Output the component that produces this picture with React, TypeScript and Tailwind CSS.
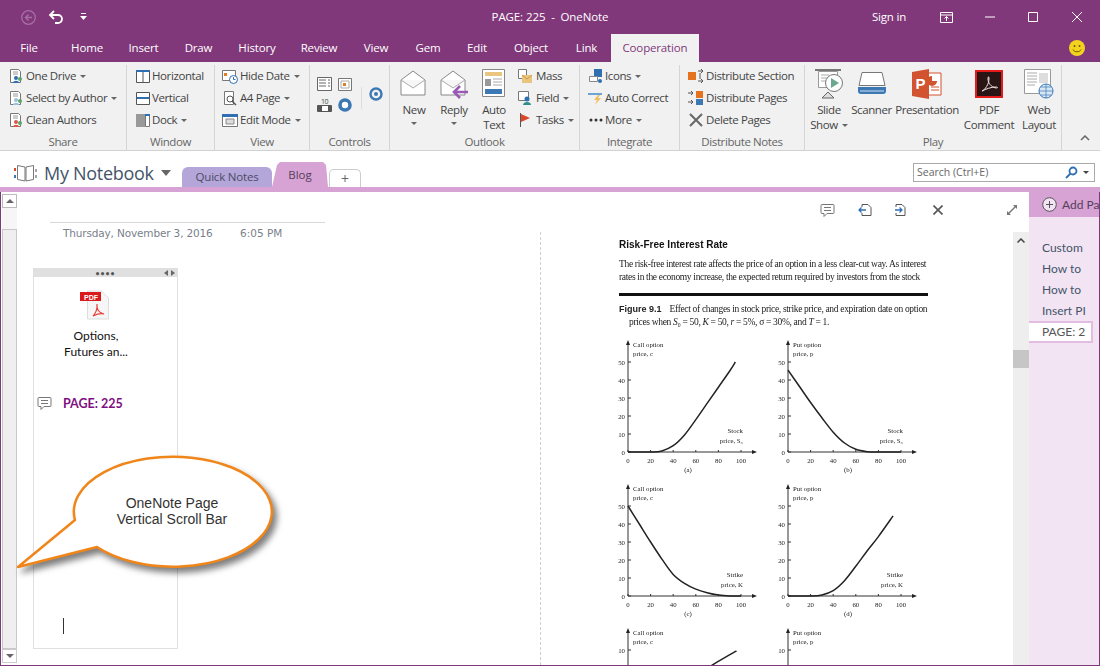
import type { ReactNode } from 'react';

const tabs = [
  { name: 'File', w: 'w-[58px]' },
  { name: 'Home', w: 'w-[58px]' },
  { name: 'Insert', w: 'w-[55px]' },
  { name: 'Draw', w: 'w-[55px]' },
  { name: 'History', w: 'w-[62px]' },
  { name: 'Review', w: 'w-[62px]' },
  { name: 'View', w: 'w-[52px]' },
  { name: 'Gem', w: 'w-[52px]' },
  { name: 'Edit', w: 'w-[46px]' },
  { name: 'Object', w: 'w-[62px]' },
  { name: 'Link', w: 'w-[49px]' },
];

const Ico = ({ children, w = 16, h = 16 }: { children: ReactNode; w?: number; h?: number }) => (
  <svg width={w} height={h} viewBox={`0 0 ${w} ${h}`} fill="none" className="shrink-0">
    {children}
  </svg>
);

const Caret = () => <span className="ml-[4px] inline-block border-x-[3px] border-t-[3px] border-x-transparent border-t-[#666] align-middle" />;

function Small({ icon, label, caret, gap = 'ml-[2px]' }: { icon: ReactNode; label: string; caret?: boolean; gap?: string }) {
  return (
    <div className="flex h-[22px] items-center whitespace-nowrap">
      {icon}
      <span className={gap}>{label}</span>
      {caret && <Caret />}
    </div>
  );
}

function Big({ icon, lines, caret, w }: { icon: ReactNode; lines: string[]; caret?: boolean; w: string }) {
  return (
    <div className={`flex shrink-0 flex-col items-center whitespace-nowrap leading-[15px] ${w}`}>
      <div className="flex h-[37px] items-center justify-center">{icon}</div>
      {lines.map((l, i) => (
        <div key={l}>
          {l}
          {caret && i === lines.length - 1 && lines.length > 1 && <Caret />}
        </div>
      ))}
      {caret && lines.length === 1 && (
        <div className="mt-[5px]">
          <span className="block border-x-[3px] border-t-[3px] border-x-transparent border-t-[#666]" />
        </div>
      )}
    </div>
  );
}

function Group({ label, w, children, pl = 'pl-[8px]' }: { label: string; w: string; children: ReactNode; pl?: string }) {
  return (
    <div className={`flex shrink-0 flex-col border-r border-[#d5d5d5] ${w}`}>
      <div className={`flex h-[68px] ${pl}`}>{children}</div>
      <div className="mt-[1px] text-center leading-[17px] text-[#666]">{label}</div>
    </div>
  );
}

const PageIcon = ({ badge }: { badge: string }) => (
  <Ico>
    <path d="M2.5 1.5h8l2 2v11h-10z" fill="#fff" stroke="#777" />
    <path d="M5 4h5M5 6h5" stroke="#999" />
    <circle cx="8" cy="10" r="2" fill={badge} />
    <circle cx="12" cy="11" r="2" fill="#5ba56a" />
    <path d="M5 15c0-3 6-3 6 0z" fill={badge} />
  </Ico>
);

const Envelope = ({ reply }: { reply?: boolean }) => (
  <Ico w={30} h={30}>
    <path d="M2 11 14 2l12 9v15H2z" fill="#fff" stroke="#888" />
    <path d="M2 11l12 8 12-8" stroke="#aaa" fill="#f6f6f6" />
    {reply && <path d="M29 23H15m6-6-6 6 6 6" stroke="#9b59b6" strokeWidth="2.6" />}
  </Ico>
);

// catmull-rom through the data points so the curves don't look kinked
function smooth(p: number[][]) {
  if (p.length === 0) return '';
  let d = `M${p[0][0]} ${p[0][1]}`;
  for (let i = 0; i < p.length - 1; i++) {
    const a = p[Math.max(i - 1, 0)];
    const b = p[i];
    const c = p[i + 1];
    const e = p[Math.min(i + 2, p.length - 1)];
    d += `C${b[0] + (c[0] - a[0]) / 6} ${b[1] + (c[1] - a[1]) / 6} ${c[0] - (e[0] - b[0]) / 6} ${c[1] - (e[1] - b[1]) / 6} ${c[0]} ${c[1]}`;
  }
  return d;
}

function Chart({ points, max = 50, top, bottom, right1, right2, caption, ticks, cut }: {
  points: number[][]; max?: number; top: string; bottom: string; right1?: string; right2?: string; caption?: string; ticks: number[]; cut?: boolean;
}) {
  const px = (x: number) => 12 + x * 1.13;
  const py = (y: number) => 114 - (y / max) * 90;
  return (
    <svg width="160" height={cut ? 39 : 144} viewBox={cut ? '0 0 160 39' : '0 0 160 144'} className="shrink-0" fill="#222" fontFamily="'Liberation Serif', serif" fontSize="6.8">
      <path d="M12 114V5" stroke="#333" strokeWidth="1" />
      <path d="M12 2l-2 5h4z" stroke="none" />
      {!cut && <path d="M12 114H137" stroke="#333" strokeWidth="1" />}
      {!cut && <path d="M141 114l-5-2v4z" stroke="none" />}
      {ticks.map((t) => (
        <g key={t}>
          <path d={`M12 ${py(t)}h3`} stroke="#333" />
          <text x="9" y={py(t) + 2.5} textAnchor="end">{t}</text>
        </g>
      ))}
      {!cut && [0, 20, 40, 60, 80, 100].map((t) => (
        <g key={t}>
          <path d={`M${px(t)} 114v-2`} stroke="#333" />
          <text x={px(t)} y="125" textAnchor="middle">{t}</text>
        </g>
      ))}
      <path d={smooth(points.map((p) => [px(p[0]), py(p[1])]))} fill="none" stroke="#222" strokeWidth="1.5" strokeLinejoin="round" />
      <text x="17" y="8.5">{top}</text>
      <text x="17" y="17.5">{bottom}</text>
      {right1 && <text x="127" y="95" textAnchor="end">{right1}</text>}
      {right2 && <text x="127" y="105" textAnchor="end">{right2}</text>}
      {caption && <text x="72" y="134" textAnchor="middle">{caption}</text>}
    </svg>
  );
}

export default function App() {
  return (
    <div className="flex h-[666px] w-[1100px] flex-col overflow-hidden bg-white font-['Open_Sans',sans-serif] text-[11px] text-[#444]">
      {/* title bar */}
      <div className="relative flex h-[34px] shrink-0 items-center bg-[#80387a] text-white">
        <div className="ml-[21px] flex items-center">
          <svg width="15" height="15" viewBox="0 0 15 15" fill="none" stroke="#a66fa3" strokeWidth="1.3">
            <circle cx="7.5" cy="7.5" r="6.8" />
            <path d="M11 7.5H4.5m3-3-3 3 3 3" />
          </svg>
          <svg width="16" height="16" viewBox="0 0 16 16" fill="none" stroke="#fff" strokeWidth="1.8" className="ml-[12px]">
            <path d="M6 2 2 6l4 4M2.5 6H10a3.5 3.5 0 0 1 0 8H7" />
          </svg>
          <svg width="7" height="8" viewBox="0 0 7 8" fill="#fff" className="ml-[16px]">
            <path d="M1 0h5v1H1zM0 3h7L3.5 7z" />
          </svg>
        </div>
        <div className="absolute left-[450px] w-[200px] text-center text-[11.5px] tracking-[-0.1px]">PAGE: 225&nbsp;&nbsp;-&nbsp;&nbsp;OneNote</div>
        <div className="ml-auto flex items-center">
          <span className="mr-[34px] text-[11.5px] tracking-[-0.2px]">Sign in</span>
          <svg width="13" height="11" viewBox="0 0 13 11" fill="none" stroke="#fff" className="mr-[32px]">
            <path d="M.5.5h12v10H.5zM.5 3h12M6.5 9V4.500M4.500 6.500l2-2 2 2" />
          </svg>
          <svg width="10" height="2" viewBox="0 0 10 2" className="mr-[33px]"><path d="M0 1h10" stroke="#fff" /></svg>
          <svg width="10" height="10" viewBox="0 0 10 10" className="mr-[34px]"><path d="M.5.5h9v9h-9z" stroke="#fff" fill="none" /></svg>
          <svg width="10" height="10" viewBox="0 0 10 10" className="mr-[18px]"><path d="M0 0l10 10M10 0 0 10" stroke="#fff" /></svg>
        </div>
      </div>

      {/* tabs */}
      <div className="flex h-[28px] shrink-0 items-stretch bg-[#80387a] text-[11.5px] tracking-[-0.15px] text-white">
        {tabs.map((t) => (
          <div key={t.name} className={`flex items-center justify-center ${t.w}`}>{t.name}</div>
        ))}
        <div className="flex w-[88px] items-center justify-center bg-[#f1f1f1] text-[#80387a]">Cooperation</div>
        <div className="ml-auto mr-[15px] flex items-center">
          <svg width="16" height="16" viewBox="0 0 16 16">
            <circle cx="8" cy="8" r="8" fill="#f4d31f" />
            <circle cx="5.5" cy="6" r="1" fill="#6b5a00" />
            <circle cx="10.5" cy="6" r="1" fill="#6b5a00" />
            <path d="M4 9.500c1 3 7 3 8 0" stroke="#6b5a00" fill="none" />
          </svg>
        </div>
      </div>

      {/* ribbon */}
      <div className="flex h-[89px] shrink-0 border-b border-[#d2d2d2] bg-[#f1f1f1] pt-[3px] text-[11.5px] tracking-[-0.4px]">
        <Group label="Share" w="w-[127px]">
          <div className="flex flex-col">
            <Small icon={<PageIcon badge="#2f6fb2" />} label="One Drive" caret />
            <Small icon={<PageIcon badge="#9dbfdc" />} label="Select by Author" caret />
            <Small icon={<PageIcon badge="#d9584a" />} label="Clean Authors" />
          </div>
        </Group>
        <Group label="Window" w="w-[88px]">
          <div className="flex flex-col">
            <Small gap="ml-[1px]" icon={<Ico><path d="M1.5 2.5h13v12h-13zM8 2.500v12" stroke="#555" fill="#fff" /><path d="M1 2h14v2H1z" fill="#2f6fb2" /></Ico>} label="Horizontal" />
            <Small gap="ml-[1px]" icon={<Ico><path d="M1.5 2.5h13v12h-13zM1.500 8.500h13" stroke="#555" fill="#fff" /><path d="M2 7h12v2H2z" fill="#2f6fb2" /></Ico>} label="Vertical" />
            <Small gap="ml-[1px]" icon={<Ico><path d="M1 2h9v13H1z" fill="#999" /><path d="M10.5 2.5h4v12h-4z" fill="#fff" stroke="#777" /><path d="M10 2h5v2h-5z" fill="#2f6fb2" /></Ico>} label="Dock" caret />
          </div>
        </Group>
        <Group label="View" w="w-[95px]" pl="pl-[7px]">
          <div className="flex flex-col">
            <Small icon={<Ico><path d="M.5 2.5h13v10H.5z" fill="#fff" stroke="#777" /><path d="M2 5h3v3H2z" fill="#e07b27" /><circle cx="11.5" cy="11.5" r="4" fill="#fff" stroke="#2f6fb2" /><path d="M11.5 9v2.500h2" stroke="#2f6fb2" /></Ico>} label="Hide Date" caret />
            <Small icon={<Ico><path d="M2.5 1.5h9v13h-9z" fill="#fff" stroke="#777" /><circle cx="8" cy="9" r="3" fill="#fff" stroke="#555" /><path d="m10 11 4 4" stroke="#555" strokeWidth="1.5" /></Ico>} label="A4 Page" caret />
            <Small icon={<Ico><path d="M.5 2.5h15v12H.5z" fill="#fff" stroke="#777" /><path d="M0 2h16v3H0z" fill="#2f6fb2" /><path d="M4 7h8v5H4z" fill="#ddd" stroke="#888" /></Ico>} label="Edit Mode" caret />
          </div>
        </Group>
        <Group label="Controls" w="w-[80px]" pl="pl-[7px]">
          <div className="grid h-[48px] grid-cols-2 gap-x-[5px] gap-y-[4px] pt-[11px]">
            <Ico><path d="M.5 1.5h14v13H.5z" fill="#fff" stroke="#666" /><path d="M2 4h7M2 7h7M2 10h7M11 4h2M11 7h2M11 10h2" stroke="#666" /></Ico>
            <Ico><path d="M.5 2.5h13v12H.5z" fill="#fff" stroke="#777" /><path d="M3 5h8v7H3z" stroke="#aaa" /><path d="M5 7h3v3H5z" fill="#e07b27" /></Ico>
            <Ico><text x="4" y="6.5" fontSize="7" fill="#444">10</text><path d="M.5 8.5h14v6H.5z" fill="#fff" stroke="#555" /><path d="M1 9h4v5H1zM11 9h3v5h-3z" fill="#555" /></Ico>
            <Ico w={14} h={16}><circle cx="7" cy="8" r="5" fill="#fff" stroke="#3c78b4" strokeWidth="3.6" /></Ico>
          </div>
          <div className="ml-[7px] mt-[22px] h-[22px] border-l border-[#ddd] pl-[7px]">
            <svg width="14" height="14" viewBox="0 0 14 14"><circle cx="7" cy="7" r="5.5" fill="none" stroke="#3c78b4" strokeWidth="2.4" /><circle cx="7" cy="7" r="2" fill="#3c78b4" /></svg>
          </div>
        </Group>
        <Group label="Outlook" w="w-[190px]" pl="pl-[4px]">
          <Big w="w-[40px]" caret lines={['New']} icon={<Envelope />} />
          <Big w="w-[40px]" caret lines={['Reply']} icon={<Envelope reply />} />
          <Big w="w-[40px]" lines={['Auto', 'Text']} icon={
            <Ico w={24} h={30}>
              <path d="M.5.5h22v27H.5z" fill="#fff" stroke="#888" />
              <path d="M3 3h17v4H3z" fill="#eac57d" />
              <path d="M3 10h6v7H3z" fill="#999" />
              <path d="M11 10h9M11 13h9M11 16h9" stroke="#aaa" />
              <path d="M3 20h17v5H3z" fill="#3c78b4" />
            </Ico>
          } />
          <div className="ml-[3px] flex flex-col">
            <Small gap="ml-[3px]" icon={<Ico><path d="M1.5 1.5h8v9h-8z" fill="#fff" stroke="#777" /><path d="M5 7h10v8H5z" fill="#eac57d" /><path d="m5 7 5 4 5-4" stroke="#c99a45" /></Ico>} label="Mass" />
            <Small gap="ml-[3px]" caret icon={<Ico><path d="M1.5 1.5h10v9h-10z" fill="#fff" stroke="#777" /><circle cx="10" cy="9" r="2.5" fill="#2f6fb2" /><path d="M6 15c0-4 8-4 8 0z" fill="#2f8f88" /></Ico>} label="Field" />
            <Small gap="ml-[3px]" caret icon={<Ico><path d="M3.5 1v14" stroke="#555" /><path d="M4 2l9 4-9 4z" fill="#d9482b" /></Ico>} label="Tasks" />
          </div>
        </Group>
        <Group label="Integrate" w="w-[100px]">
          <div className="flex flex-col">
            <Small gap="ml-[1px]" caret icon={<Ico><path d="M6 1h8v8H6z" fill="#2f6fb2" /><path d="M1.5 8.5h8v5h-8z" fill="#fff" stroke="#888" /><circle cx="12" cy="13" r="2" fill="#2f6fb2" /></Ico>} label="Icons" />
            <Small gap="ml-[1px]" icon={<Ico><path d="M0 3h14v2H0z" fill="#6fa3d6" /><path d="M10 5 6 10h3l-2 5 6-7h-3l2-3z" fill="#f0c060" /></Ico>} label="Auto Correct" />
            <Small gap="ml-[1px]" caret icon={<Ico><circle cx="3" cy="8" r="1.5" fill="#333" /><circle cx="8" cy="8" r="1.5" fill="#333" /><circle cx="13" cy="8" r="1.5" fill="#333" /></Ico>} label="More" />
          </div>
        </Group>
        <Group label="Distribute Notes" w="w-[125px]">
          <div className="flex flex-col">
            <Small icon={<Ico><path d="M0 4h8v8H0z" fill="#e5721f" /><path d="M10 3h5m-2-2 2 2-2 2M10 13h5m-2-2 2 2-2 2M12 5v6" stroke="#555" /></Ico>} label="Distribute Section" />
            <Small icon={<Ico><path d="M0 3h5m-2-2 2 2-2 2M0 12h5m-2-2 2 2-2 2" stroke="#555" /><path d="M8 1h7v7H8z" fill="#e5721f" /><path d="M8 9h7v6H8z" fill="#3c78b4" /></Ico>} label="Distribute Pages" />
            <Small icon={<Ico><path d="M2 2l12 12M14 2 2 14" stroke="#666" strokeWidth="2" /></Ico>} label="Delete Pages" />
          </div>
        </Group>
        <Group label="Play" w="w-[257px]" pl="pl-[3px]">
          <Big w="w-[42px]" caret lines={['Slide', 'Show']} icon={
            <Ico w={30} h={32}>
              <path d="M1 1h26v2H1z" fill="#777" />
              <path d="M4.5 3.5h19v16h-19z" fill="#fff" stroke="#999" />
              <path d="M7 7h8M7 10h6M7 13h6" stroke="#aaa" />
              <circle cx="20" cy="15" r="8.5" fill="#fff" stroke="#777" />
              <path d="m17 10 8 5-8 5z" fill="#6aa98f" />
              <path d="M8 30l6-6 6 6z" fill="#ddd" stroke="#666" />
            </Ico>
          } />
          <Big w="w-[43px]" lines={['Scanner']} icon={
            <Ico w={30} h={28}>
              <path d="M5 2.5h20l3 13H2z" fill="#fff" stroke="#777" />
              <path d="M1 17h28v4a3 3 0 0 1-3 3H4a3 3 0 0 1-3-3z" fill="#3c78b4" />
              <path d="M3 21h24" stroke="#cfe0f0" />
            </Ico>
          } />
          <Big w="w-[68px]" lines={['Presentation']} icon={
            <Ico w={30} h={30}>
              <path d="M12 4h17v22H12z" fill="#fff" stroke="#d2532f" />
              <path d="M20 7a5 5 0 1 0 5 5h-5z" fill="#d2532f" />
              <path d="M19 18h8M19 21h8" stroke="#d2532f" />
              <path d="M0 3 17 0v30L0 27z" fill="#d2532f" />
              <text x="3.5" y="20" fontSize="15" fontWeight="700" fill="#fff" fontFamily="'Liberation Sans', sans-serif">P</text>
            </Ico>
          } />
          <Big w="w-[56px]" lines={['PDF', 'Comment']} icon={
            <Ico w={28} h={28}>
              <path d="M1 1h26v26H1z" fill="#2a1515" stroke="#e31b1b" strokeWidth="2" />
              <path d="M7 21c3-1 7-7 7-12 0-3-1-3-1 0 0 4 3 8 8 9 2 0 2-1 0-1-5 0-10 2-14 4z" stroke="#f0e4e4" fill="none" />
            </Ico>
          } />
          <Big w="w-[44px]" lines={['Web', 'Layout']} icon={
            <Ico w={30} h={30}>
              <path d="M.5.5h26v24H.5z" fill="#fff" stroke="#999" />
              <path d="M3 4h10M3 7h10M3 10h10M3 13h10M3 16h8" stroke="#aaa" />
              <path d="M15 4h9v10h-9z" fill="#ddd" />
              <circle cx="22" cy="22" r="7" fill="#d7e7f6" stroke="#3c78b4" />
              <path d="M15 22h14M22 15v14M17 18h10M17 26h10" stroke="#3c78b4" strokeWidth="0.7" />
            </Ico>
          } />
        </Group>
        <div className="flex flex-1 items-end justify-center pb-[9px] pl-[8px]">
          <svg width="10" height="6" viewBox="0 0 10 6" fill="none" stroke="#666" strokeWidth="1.5"><path d="m1 5 4-4 4 4" /></svg>
        </div>
      </div>

      {/* notebook bar */}
      <div className="flex h-[36px] shrink-0 items-end bg-white">
        <div className="mb-[2px] ml-[14px] flex w-[168px] items-center">
          <svg width="23" height="20" viewBox="0 0 23 20" fill="none" className="shrink-0">
            <path d="M3.5 2.5 11 4v14l-7.500-1.500zM19.500 2.500 12 4v14l7.500-1.500z" fill="#fff" stroke="#777" />
            <path d="M1 5v3" stroke="#d9482b" strokeWidth="2" />
            <path d="M1 12v3" stroke="#3c78b4" strokeWidth="2" />
            <path d="M22 6v3M22 12v3" stroke="#888" strokeWidth="1.5" />
          </svg>
          <span className="ml-[7px] whitespace-nowrap text-[18px] leading-[24px] tracking-[-0.3px] text-[#44546a]">My Notebook</span>
          <span className="ml-[7px] border-x-[5px] border-t-[6px] border-x-transparent border-t-[#666]" />
        </div>
        <div className="flex h-[20px] w-[90px] items-center justify-center rounded-t-[6px] bg-[#b5a6d9] text-[11.5px] tracking-[-0.2px] text-[#4c4c66]">Quick Notes</div>
        <div className="flex h-[25px] w-[56px] items-center justify-center bg-[#d7a3d5] text-[11.5px] text-[#55405a] [clip-path:polygon(0_100%,5px_3px,8px_0,calc(100%-5px)_0,calc(100%-2px)_3px,100%_100%)]">Blog</div>
        <div className="ml-[1px] flex h-[18px] w-[32px] items-center justify-center rounded-t-[5px] border border-b-0 border-[#ccc] text-[14px] leading-none text-[#666]">+</div>
        <div className="mb-[5px] ml-auto mr-[5px] flex h-[19px] w-[182px] items-center justify-between border border-[#aaa] pl-[3px] pr-[5px] text-[10.5px] text-[#666]">
          <span>Search (Ctrl+E)</span>
          <span className="flex items-center">
            <svg width="13" height="13" viewBox="0 0 13 13" fill="none" stroke="#2f6fb2" strokeWidth="1.8"><circle cx="8" cy="5" r="3.5" /><path d="M5.5 7.5 1 12" /></svg>
            <span className="ml-[5px] border-x-[3px] border-t-[3px] border-x-transparent border-t-[#444]" />
          </span>
        </div>
      </div>

      <div className="h-[5px] shrink-0 bg-[#d7a3d5]" />

      {/* main */}
      <div className="flex min-h-0 flex-1 border-b border-l border-[#80387a]">
        <div className="flex w-[16px] shrink-0 flex-col pl-[1px] pt-[2px]">
          <div className="flex h-[14px] w-[15px] items-center justify-center border border-[#bbb] bg-white">
            <span className="border-x-[4px] border-b-[4px] border-x-transparent border-b-[#666]" />
          </div>
          <div className="h-[21px] bg-[#f6f6f6]" />
          <div className="w-[15px] flex-1 border border-[#c8c8c8] bg-[#efefef]" />
          <div className="flex h-[14px] w-[15px] items-center justify-center border border-[#ccc] bg-white">
            <span className="border-x-[4px] border-t-[4px] border-x-transparent border-t-[#666]" />
          </div>
          <div className="h-[2px]" />
        </div>

        {/* note page */}
        <div className="relative w-[523px] shrink-0 pl-[16px] pt-[30px]">
          <div className="ml-[17px] h-[1px] w-[275px] bg-[#d8d8d8]" />
          <div className="ml-[30px] mt-[3px] flex font-['DejaVu_Sans',sans-serif] text-[10.5px] leading-[14px] text-[#7a7f8a]">
            <span className="w-[177px] tracking-[-0.15px]">Thursday, November 3, 2016</span>
            <span>6:05 PM</span>
          </div>
          <div className="mt-[28px] flex h-[381px] w-[145px] flex-col border border-[#e0e0e0] font-['Lato',sans-serif]">
            <div className="relative flex h-[8px] shrink-0 items-center justify-center bg-[#e0e0e0]">
              <span className="text-[7px] font-bold leading-none tracking-[1px] text-[#555]">••••</span>
              <span className="absolute right-[2px] top-[1px] flex gap-[3px]">
                <span className="border-y-[3px] border-r-[4px] border-y-transparent border-r-[#666]" />
                <span className="border-y-[3px] border-l-[4px] border-y-transparent border-l-[#666]" />
              </span>
            </div>
            <div className="ml-[46px] mt-[13px] w-[30px]">
              <svg width="30" height="30" viewBox="0 0 30 30">
                <path d="M7.5 1h14l7 7v21h-21z" fill="#f6f6f6" stroke="#ddd" />
                <path d="M0 2h21v9H0z" fill="#d9191c" />
                <text x="4" y="9.5" fontSize="7" fontWeight="700" fill="#fff" fontFamily="'Liberation Sans', sans-serif">PDF</text>
                <path d="M13 26c2-2 5-7 4-12-1 5 2 9 7 10-3-1-7 0-11 2z" fill="none" stroke="#e8403a" strokeWidth="1.2" />
              </svg>
            </div>
            <div className="ml-[2px] mt-[8px] w-[120px] text-center text-[12px] leading-[16px] text-[#111]">
              Options,
              <br />
              Futures an...
            </div>
            <div className="relative ml-[29px] mt-[36px] text-[12.5px] font-bold leading-[16px] text-[#800f80]">
              PAGE: 225
              <svg width="15" height="15" viewBox="0 0 15 15" fill="none" stroke="#777" className="absolute -left-[26px] top-[0px]">
                <path d="M2 1.5h11a1 1 0 0 1 1 1v7a1 1 0 0 1-1 1H7l-3 3v-3H2a1 1 0 0 1-1-1v-7a1 1 0 0 1 1-1zM4 4.500h7M4 7.500h7" />
              </svg>
            </div>
            <div className="mb-[14px] ml-[29px] mt-auto h-[16px] w-[1px] bg-[#333]" />
          </div>

          {/* callout */}
          <div className="absolute left-0 top-[262px] h-[125px] w-[270px]">
            <svg width="270" height="125" viewBox="0 0 270 125" className="absolute inset-0 overflow-visible drop-shadow-[4px_5px_3px_rgba(0,0,0,0.5)]">
              <path d="M58 66 1 113 80 93A99 55 0 1 0 58 66Z" fill="#fff" stroke="#f0851a" strokeWidth="2.5" strokeLinejoin="round" />
            </svg>
            <div className="absolute left-[55px] top-[41px] w-[200px] text-center font-['Liberation_Sans',sans-serif] text-[14px] leading-[16px] text-[#333]">
              OneNote Page
              <br />
              Vertical Scroll Bar
            </div>
          </div>
        </div>

        {/* pdf pane */}
        <div className="flex w-[489px] min-w-0 shrink-0 flex-col">
          <div className="flex h-[40px] shrink-0 items-center pb-[4px] pl-[280px] text-[#666]">
            <svg width="15" height="15" viewBox="0 0 15 15" fill="none" stroke="#777"><path d="M2 1.5h11a1 1 0 0 1 1 1v7a1 1 0 0 1-1 1H7l-3 3v-3H2a1 1 0 0 1-1-1v-7a1 1 0 0 1 1-1zM4 4.500h7M4 7.500h7" /></svg>
            <svg width="14" height="14" viewBox="0 0 14 14" fill="none" className="ml-[23px]"><path d="M4 4V1.500h6l3 3v8H4V10" stroke="#555" /><path d="M8 7H1m2.500-2.500L1 7l2.500 2.500" stroke="#2f6fb2" strokeWidth="1.3" /></svg>
            <svg width="14" height="14" viewBox="0 0 14 14" fill="none" className="ml-[22px]"><path d="M2 4V1.500h6l3 3v8H2V10" stroke="#555" /><path d="M1 7h7M5.500 4.500 8 7 5.500 9.500" stroke="#2f6fb2" strokeWidth="1.3" /></svg>
            <svg width="10" height="10" viewBox="0 0 10 10" className="ml-[25px]"><path d="m.5.5 9 9m0-9-9 9" stroke="#555" strokeWidth="1.6" /></svg>
            <svg width="10" height="10" viewBox="0 0 10 10" fill="#777" className="ml-[64px]"><path d="M6 0h4v4L8.500 2.500l-6 6L4 10H0V6l1.500 1.500 6-6z" /></svg>
          </div>
          <div className="flex min-h-0 flex-1">
            <div className="min-w-0 flex-1 overflow-hidden border-l border-dashed border-[#d0d0d0] pl-[78px] pt-[7px] font-['Liberation_Serif',serif] text-[#222] blur-[0.4px]">
              <div className="w-[309px]">
                <div className="whitespace-nowrap font-['Liberation_Sans',sans-serif] text-[10px] font-bold leading-[12px] text-[#111]">Risk-Free Interest Rate</div>
                <div className="mt-[7px] whitespace-nowrap text-[9.5px] leading-[13px] tracking-[-0.33px]">
                  The risk-free interest rate affects the price of an option in a less clear-cut way. As interest
                  <br />
                  rates in the economy increase, the expected return required by investors from the stock
                </div>
                <div className="mt-[9px] h-[3px] bg-[#111]" />
                <div className="mt-[7px] whitespace-nowrap text-[9.5px] leading-[13px] tracking-[-0.33px]">
                  <b className="font-['Liberation_Sans',sans-serif] text-[9px] tracking-normal">Figure 9.1</b>
                  <span className="ml-[8px]">Effect of changes in stock price, strike price, and expiration date on option</span>
                  <br />
                  <span className="ml-[10px]">prices when <i>S</i>₀ = 50, <i>K</i> = 50, <i>r</i> = 5%, σ = 30%, and <i>T</i> = 1.</span>
                </div>
              </div>
              <div className="-ml-[3px] mt-[9px] grid w-[320px] grid-cols-2">
                <Chart ticks={[0, 10, 20, 30, 40, 50]} top="Call option" bottom="price, c" right1="Stock" right2="price, S₀" caption="(a)"
                  points={[[0, 0], [20, 0], [30, 0.6], [40, 3.5], [50, 9.5], [60, 18], [70, 27], [80, 36], [90, 45], [95, 50]]} />
                <Chart ticks={[0, 10, 20, 30, 40, 50]} top="Put option" bottom="price, p" right1="Stock" right2="price, S₀" caption="(b)"
                  points={[[0, 45.5], [10, 36.5], [20, 27.5], [30, 19], [40, 11], [50, 5], [60, 1.5], [70, 0.2], [80, 0], [100, 0]]} />
                <Chart ticks={[0, 10, 20, 30, 40, 50]} top="Call option" bottom="price, c" right1="Strike" right2="price, K" caption="(c)"
                  points={[[0, 50], [10, 40], [20, 30], [30, 20.5], [40, 12], [50, 7], [60, 3.8], [70, 1.8], [80, 0.5], [90, 0], [100, 0]]} />
                <Chart ticks={[0, 10, 20, 30, 40, 50]} top="Put option" bottom="price, p" right1="Strike" right2="price, K" caption="(d)"
                  points={[[0, 0], [20, 0], [30, 0.6], [40, 3], [50, 8.5], [60, 16.5], [70, 25], [80, 33], [93, 44.5]]} />
                <Chart cut ticks={[10]} max={10} top="Call option" bottom="price, c"
                  points={[[60, 7], [73, 8.2], [96, 9.9]]} />
                <Chart cut ticks={[10]} max={10} top="Put option" bottom="price, p" points={[]} />
              </div>
            </div>
            <div className="flex w-[16px] shrink-0 flex-col items-center bg-[#eeeeee] pt-[6px]">
              <svg width="8" height="5" viewBox="0 0 8 5" fill="none" stroke="#444" strokeWidth="1.5"><path d="m.5 4.500 3.500-3.500 3.500 3.500" /></svg>
              <div className="mt-[107px] h-[18px] w-full bg-[#c6c6c6]" />
            </div>
          </div>
        </div>

        {/* page list */}
        <div className="flex min-w-0 flex-1 flex-col overflow-hidden border-r border-[#80387a] bg-[#f3e4f3] font-['Lato',sans-serif] text-[12px] text-[#44546a]">
          <div className="flex h-[25px] shrink-0 items-center whitespace-nowrap bg-[#d7a3d5] pl-[13px] text-[#55405a]">
            <svg width="15" height="15" viewBox="0 0 15 15" fill="none" stroke="#555" className="shrink-0">
              <circle cx="7.5" cy="7.5" r="6.8" fill="#f3e4f3" />
              <path d="M7.5 4v7M4 7.500h7" />
            </svg>
            <span className="ml-[5px]">Add Page</span>
          </div>
          <div className="flex flex-col pt-[20px] leading-[21px]">
            <div className="pl-[13px]">Custom</div>
            <div className="pl-[13px]">How to</div>
            <div className="pl-[13px]">How to</div>
            <div className="pl-[13px]">Insert PI</div>
            <div className="mr-[6px] h-[22px] border-2 border-l-0 border-[#e3bde1] bg-white pl-[13px] leading-[18px] text-[#555]">PAGE: 2</div>
          </div>
        </div>
      </div>
    </div>
  );
}
